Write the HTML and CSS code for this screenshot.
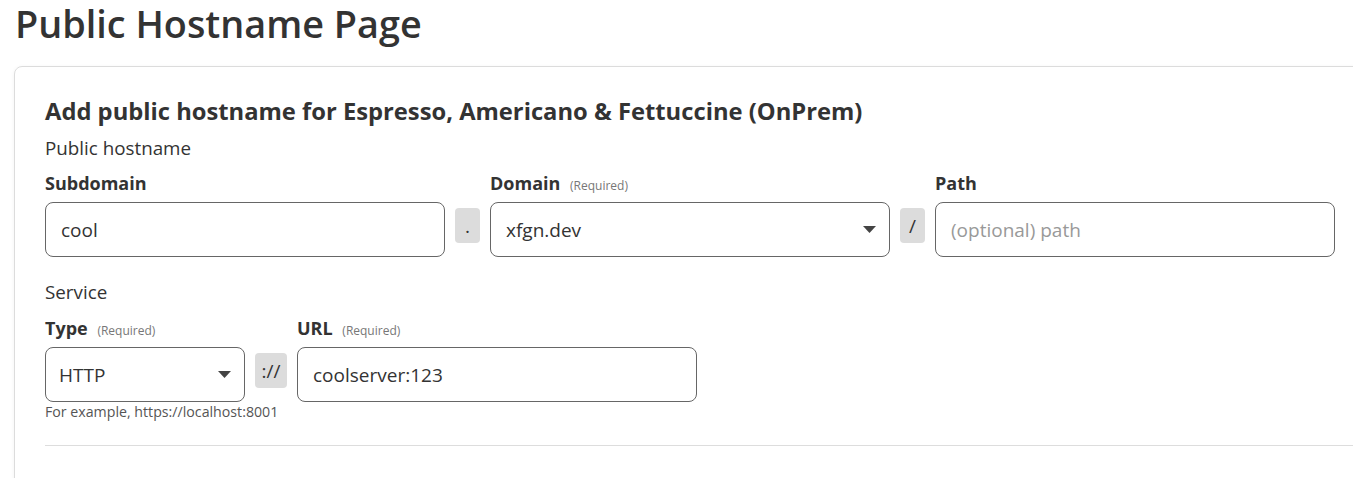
FILE: index.html
```html
<!DOCTYPE html>
<html lang="en">
<head>
<meta charset="utf-8">
<title>Public Hostname Page</title>
<link rel="stylesheet" href="styles.css">
</head>
<body>
<h1 class="page-title">Public Hostname Page</h1>
<div class="card">
  <h2 class="card-title">Add public hostname for Espresso, Americano &amp; Fettuccine (OnPrem)</h2>
  <div class="section-label">Public hostname</div>
  <div class="row">
    <div class="field w400">
      <label class="field-label">Subdomain</label>
      <input class="control" type="text" value="cool">
    </div>
    <span class="sep sep-narrow">.</span>
    <div class="field w400">
      <label class="field-label">Domain <span class="req">(Required)</span></label>
      <div class="select-wrap">
        <select class="control"><option>xfgn.dev</option></select>
        <svg class="caret" width="13" height="7" viewBox="0 0 13 7"><path d="M0 0H13L6.5 7Z" fill="#444"/></svg>
      </div>
    </div>
    <span class="sep sep-narrow">/</span>
    <div class="field w400">
      <label class="field-label">Path</label>
      <input class="control" type="text" placeholder="(optional) path">
    </div>
  </div>

  <div class="section-label service">Service</div>
  <div class="row">
    <div class="field w200">
      <label class="field-label">Type <span class="req">(Required)</span></label>
      <div class="select-wrap">
        <select class="control sel-type"><option>HTTP</option></select>
        <svg class="caret" width="13" height="7" viewBox="0 0 13 7"><path d="M0 0H13L6.5 7Z" fill="#444"/></svg>
      </div>
    </div>
    <span class="sep sep-wide">://</span>
    <div class="field w400">
      <label class="field-label">URL <span class="req">(Required)</span></label>
      <input class="control" type="text" value="coolserver:123">
    </div>
  </div>
  <div class="hint">For example, https://localhost:8001</div>
  <hr class="divider">
</div>
</body>
</html>
```

FILE: styles.css
```css
html, body {
  overflow: hidden;
}
body {
  margin: 0;
  padding: 0 0 0 14px;
  font-family: "Open Sans", "Noto Sans", sans-serif;
  color: #333;
  background: #fff;
}
.page-title {
  margin: 0;
  padding-left: 1px;
  font-size: 37.8px;
  font-weight: 600;
  line-height: 48px;
  color: #333;
}
.card {
  margin-top: 18px;
  width: 1400px;
  border: 1px solid #dcdcdc;
  border-radius: 8px;
  padding: 30px 30px 60px 30px;
  box-shadow: 0 1px 4px rgba(0,0,0,0.05);
}
.card-title {
  margin: 0;
  font-size: 23.75px;
  line-height: 29px;
  font-weight: 700;
  color: #333;
}
.section-label {
  margin-top: 9px;
  font-size: 18.8px;
  line-height: 27px;
  color: #333;
}
.section-label.service {
  margin-top: 22px;
}
.row {
  display: flex;
  gap: 10px;
  margin-top: 9px;
}
.service + .row {
  margin-top: 10px;
}
.field {
  display: flex;
  flex-direction: column;
  gap: 7px;
}
.w400 { width: 400px; }
.w200 { width: 200px; }
.field-label {
  display: block;
  height: 24px;
  font-size: 18px;
  line-height: 24px;
  font-weight: 700;
  color: #333;
  white-space: nowrap;
}
.req {
  margin-left: 5px;
  font-size: 12px;
  line-height: 1;
  font-weight: 400;
  color: #777;
}
.control {
  box-sizing: border-box;
  width: 100%;
  height: 55px;
  margin: 0;
  border: 1px solid #666;
  border-radius: 8px;
  padding: 0 15px;
  font-family: inherit;
  font-size: 19px;
  color: #333;
  background: #fff;
  outline: none;
  display: block;
}
.control::placeholder {
  color: #999;
}
select.control {
  appearance: none;
  -webkit-appearance: none;
}
.sel-type {
  padding-left: 13px;
}
.select-wrap {
  position: relative;
}
.caret {
  position: absolute;
  right: 14px;
  top: 24px;
  pointer-events: none;
}
.sep {
  align-self: flex-end;
  margin-bottom: 14px;
  height: 35px;
  border-radius: 4px;
  background: #dcdcdc;
  display: flex;
  align-items: center;
  justify-content: center;
  font-size: 19px;
  color: #333;
}
.sep-narrow { width: 25px; }
.sep-wide { width: 32px; }
.hint {
  font-size: 14.2px;
  line-height: 20px;
  color: #555;
}
.divider {
  margin: 23px 0 0 0;
  border: 0;
  border-top: 1px solid #ddd;
}
```
